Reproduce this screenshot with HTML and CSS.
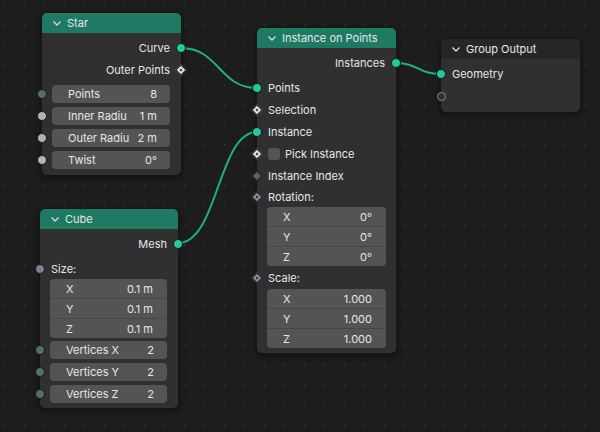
FILE: index.html
```html
<!DOCTYPE html>
<html>
<head>
<meta charset="utf-8">
<link rel="stylesheet" href="styles.css">
</head>
<body>
<div class="canvas">
  <svg class="links" width="600" height="432" viewBox="0 0 600 432">
    <path d="M181 48 C219 48 219 88 257 88"/>
    <path d="M178 243 C218 243 218 132 257 132"/>
    <path d="M396 63 C418 63 418 74 441 74"/>
  </svg>

  <div class="node n-star">
    <div class="hdr"><svg class="chev" viewBox="0 0 8 5"><polyline points="0.5,0.5 4,4 7.5,0.5"/></svg><span>Star</span></div>
    <div class="body">
      <div class="row out"><span>Curve</span><i class="sock geo"></i></div>
      <div class="row out"><span>Outer Points</span><i class="dia bool"></i></div>
      <div class="fields">
        <div class="frow"><i class="sock int"></i><div class="field"><span>Points</span><span>8</span></div></div>
        <div class="frow"><i class="sock flt"></i><div class="field"><span>Inner Radiu</span><span>1 m</span></div></div>
        <div class="frow"><i class="sock flt"></i><div class="field"><span>Outer Radiu</span><span>2 m</span></div></div>
        <div class="frow"><i class="sock flt"></i><div class="field"><span>Twist</span><span>0°</span></div></div>
      </div>
    </div>
  </div>

  <div class="node n-cube">
    <div class="hdr"><svg class="chev" viewBox="0 0 8 5"><polyline points="0.5,0.5 4,4 7.5,0.5"/></svg><span>Cube</span></div>
    <div class="body">
      <div class="row out"><span>Mesh</span><i class="sock geo"></i></div>
      <div class="row lbl size"><i class="sock vec"></i><span>Size:</span></div>
      <div class="vwrap">
        <div class="vec">
          <div class="vrow"><span>X</span><span>0.1 m</span></div>
          <div class="vrow"><span>Y</span><span>0.1 m</span></div>
          <div class="vrow"><span>Z</span><span>0.1 m</span></div>
        </div>
      </div>
      <div class="fields f-cube">
        <div class="frow"><i class="sock int"></i><div class="field"><span>Vertices X</span><span>2</span></div></div>
        <div class="frow"><i class="sock int"></i><div class="field"><span>Vertices Y</span><span>2</span></div></div>
        <div class="frow"><i class="sock int"></i><div class="field"><span>Vertices Z</span><span>2</span></div></div>
      </div>
    </div>
  </div>

  <div class="node n-inst">
    <div class="hdr"><svg class="chev" viewBox="0 0 8 5"><polyline points="0.5,0.5 4,4 7.5,0.5"/></svg><span>Instance on Points</span></div>
    <div class="body">
      <div class="row out"><span>Instances</span><i class="sock geo"></i></div>
      <div class="row first-in"><i class="sock geo"></i><span>Points</span></div>
      <div class="row"><i class="dia bool"></i><span>Selection</span></div>
      <div class="row"><i class="sock geo"></i><span>Instance</span></div>
      <div class="row"><i class="dia bool"></i><span class="check"></span><span>Pick Instance</span></div>
      <div class="row"><i class="dia intd nodot"></i><span>Instance Index</span></div>
      <div class="row lbl rot"><i class="dia rotd"></i><span>Rotation:</span></div>
      <div class="vwrap">
        <div class="vec">
          <div class="vrow"><span>X</span><span>0°</span></div>
          <div class="vrow"><span>Y</span><span>0°</span></div>
          <div class="vrow"><span>Z</span><span>0°</span></div>
        </div>
      </div>
      <div class="row lbl scl"><i class="dia rotd"></i><span>Scale:</span></div>
      <div class="vwrap">
        <div class="vec">
          <div class="vrow"><span>X</span><span>1.000</span></div>
          <div class="vrow"><span>Y</span><span>1.000</span></div>
          <div class="vrow"><span>Z</span><span>1.000</span></div>
        </div>
      </div>
    </div>
  </div>

  <div class="node n-out">
    <div class="hdr"><svg class="chev" viewBox="0 0 8 5"><polyline points="0.5,0.5 4,4 7.5,0.5"/></svg><span>Group Output</span></div>
    <div class="body">
      <div class="row"><i class="sock geo"></i><span>Geometry</span></div>
      <div class="row"><i class="sock empty"></i></div>
    </div>
  </div>
</div>
</body>
</html>
```

FILE: styles.css
```css
* { box-sizing: border-box; margin: 0; padding: 0; }
html, body { width: 600px; height: 432px; overflow: hidden; }
body {
  background: #1d1d1d;
  font-family: Inter, "DejaVu Sans", sans-serif;
  font-size: 11px;
  color: #e6e6e6;
}
.canvas {
  position: relative;
  width: 600px;
  height: 432px;
  background-color: #1d1d1d;
  background-image: radial-gradient(circle at center, #2b2b2b 0, #2b2b2b 1px, transparent 1.4px);
  background-size: 20px 20px;
  background-position: -5px -5px;
}
.links { position: absolute; left: 0; top: 0; }
.links path { fill: none; stroke: #1fb08b; stroke-width: 2; }

.node {
  position: absolute;
  width: 139px;
  background: #303030;
  border-radius: 5px;
  box-shadow: 0 0 0 1px #161616, 0 2px 6px 1px rgba(0, 0, 0, 0.45);
}
.n-star { left: 42px; top: 13px; }
.n-cube { left: 40px; top: 209px; width: 138px; }
.n-inst { left: 257px; top: 28px; }
.n-out { left: 441px; top: 39px; }

.hdr {
  height: 20px;
  background: #1f7a64;
  border-radius: 5px 5px 0 0;
  display: flex;
  align-items: center;
  gap: 6px;
  padding-left: 11px;
  color: #e6e6e6;
  font-size: 11px;
}
.n-out .hdr { background: #262626; }
.chev { width: 8px; height: 5px; fill: none; stroke: #dadada; stroke-width: 1.3; }

.body { padding: 4px 0 5px; }
.row {
  position: relative;
  height: 22px;
  display: flex;
  align-items: center;
  padding: 0 11px;
}
.out { justify-content: flex-end; }
.first-in { margin-top: 3px; }
.lbl.size { height: 21px; margin-top: 3px; }
.lbl.rot { height: 20px; }
.lbl.scl { margin-top: 1px; }

.fields {
  display: flex;
  flex-direction: column;
  gap: 4px;
  margin-top: 4px;
  padding-bottom: 1px;
}
.f-cube { margin-top: 3px; padding-bottom: 0; }
.frow {
  position: relative;
  padding: 0 11px 0 10px;
}
.field {
  height: 18px;
  background: #545454;
  border-radius: 4px;
  display: flex;
  justify-content: space-between;
  align-items: center;
  padding: 0 13px 0 16px;
  color: #e6e6e6;
}
.vwrap { padding: 0 11px 0 10px; }
.n-inst .vwrap { padding: 0 10px; }
.vec {
  background: #545454;
  border-radius: 4px;
  overflow: hidden;
}
.vrow {
  height: 19px;
  display: flex;
  justify-content: space-between;
  align-items: center;
  padding: 0 14px 0 16px;
  color: #e6e6e6;
}
.vrow + .vrow { height: 20px; border-top: 1px solid #474747; }

.check {
  width: 12px;
  height: 12px;
  background: #545454;
  border-radius: 3px;
  margin-right: 5px;
}

.sock {
  position: absolute;
  top: 50%;
  width: 10px;
  height: 10px;
  margin-top: -5px;
  border-radius: 50%;
  border: 1px solid #171717;
  left: -5px;
}
.out .sock { left: auto; right: -5px; }
.geo { background: #1fcb9e; }
.flt { background: #b2b2b2; }
.int { background: #56705f; }
.sock.vec { background: #7c7e92; }
.empty { background: #303030; border: 1.5px solid #8a8a8a; width: 9px; height: 9px; margin-top: -4.5px; left: -4.5px; }

.dia {
  position: absolute;
  top: 50%;
  left: -4px;
  width: 8px;
  height: 8px;
  margin-top: -4px;
  transform: rotate(45deg);
  border: 1px solid #1a1a1a;
}
.out .dia { left: auto; right: -4px; }
.dia::after {
  content: "";
  position: absolute;
  left: 2px;
  top: 2px;
  width: 2px;
  height: 2px;
  background: #2a2a2a;
}
.dia.nodot::after { display: none; }
.bool { background: #e4e4e4; }
.intd { background: #5a625e; }
.rotd { background: #8c8ca2; }
```
